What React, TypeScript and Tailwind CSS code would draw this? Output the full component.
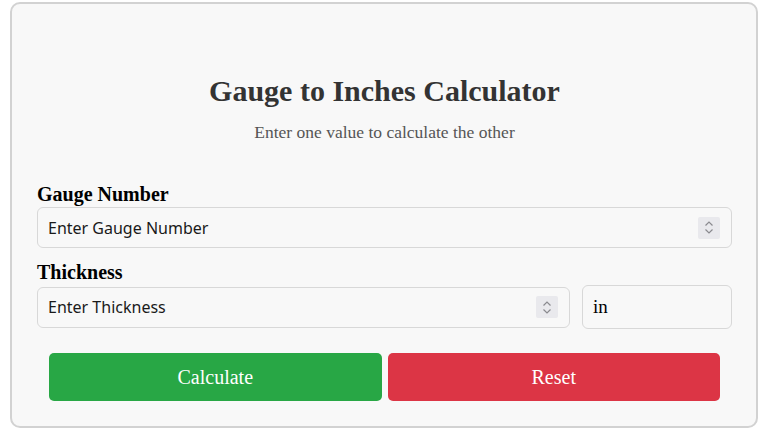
import React from "react";

function Spinner() {
  return (
    <div className="w-[22px] h-[22px] bg-[#e9e9ed] rounded-[2px] flex flex-col items-center justify-center gap-[1px] shrink-0">
      <svg width="10" height="7" viewBox="0 0 10 7" fill="none">
        <path d="M1.5 5.5 L5 2 L8.5 5.5" stroke="#8a8a8f" strokeWidth="1.2" />
      </svg>
      <svg width="10" height="7" viewBox="0 0 10 7" fill="none">
        <path d="M1.5 1.5 L5 5 L8.5 1.5" stroke="#8a8a8f" strokeWidth="1.2" />
      </svg>
    </div>
  );
}

export default function App() {
  const serif = { fontFamily: '"Liberation Serif", "Times New Roman", serif' };
  const sans = { fontFamily: '"Noto Sans", Tahoma, Verdana, sans-serif' };
  return (
    <div className="bg-white min-h-[432px] px-[10px] pt-[2px]" style={serif}>
      <div className="h-[426px] border-2 border-[#d2d2d2] rounded-[10px] bg-[#f8f8f8] pl-[25px] pr-[24px] pt-[69px]">
        <h1 className="text-center text-[30px] leading-[36px] font-bold text-[#333]">
          Gauge to Inches Calculator
        </h1>
        <p className="text-center text-[17.5px] leading-[20px] text-[#555] mt-[13px]">
          Enter one value to calculate the other
        </p>
        <label className="block text-[20px] leading-[24px] font-bold text-black mt-[40px]">
          Gauge Number
        </label>
        <div className="mt-[1px] h-[41px] border border-[#d8d8d8] rounded-[6px] bg-[#f8f8f8] flex items-center pl-[10px] pr-[11px]">
          <input
            type="text"
            placeholder="Enter Gauge Number"
            className="flex-1 bg-transparent outline-none text-[16px] placeholder:text-[#1a1a1a] text-[#1a1a1a]"
            style={sans}
          />
          <Spinner />
        </div>
        <label className="block text-[20px] leading-[24px] font-bold text-black mt-[12px]">
          Thickness
        </label>
        <div className="mt-[1px] flex items-center gap-[12px]">
          <div className="flex-1 h-[41px] border border-[#d8d8d8] rounded-[6px] bg-[#f8f8f8] flex items-center pl-[10px] pr-[11px]">
            <input
              type="text"
              placeholder="Enter Thickness"
              className="flex-1 min-w-0 bg-transparent outline-none text-[16px] placeholder:text-[#1a1a1a] text-[#1a1a1a]"
              style={sans}
            />
            <Spinner />
          </div>
          <div className="w-[150px] h-[44px] border border-[#d8d8d8] rounded-[6px] bg-[#f8f8f8] flex items-center pl-[10px] text-[19px] text-black">
            in
          </div>
        </div>
        <div className="mt-[24px] mx-[12px] flex gap-[6px]">
          <button className="flex-1 h-[48px] rounded-[5px] bg-[#28a745] text-white text-[20px]">
            Calculate
          </button>
          <button className="flex-1 h-[48px] rounded-[5px] bg-[#dc3545] text-white text-[20px]">
            Reset
          </button>
        </div>
      </div>
    </div>
  );
}
